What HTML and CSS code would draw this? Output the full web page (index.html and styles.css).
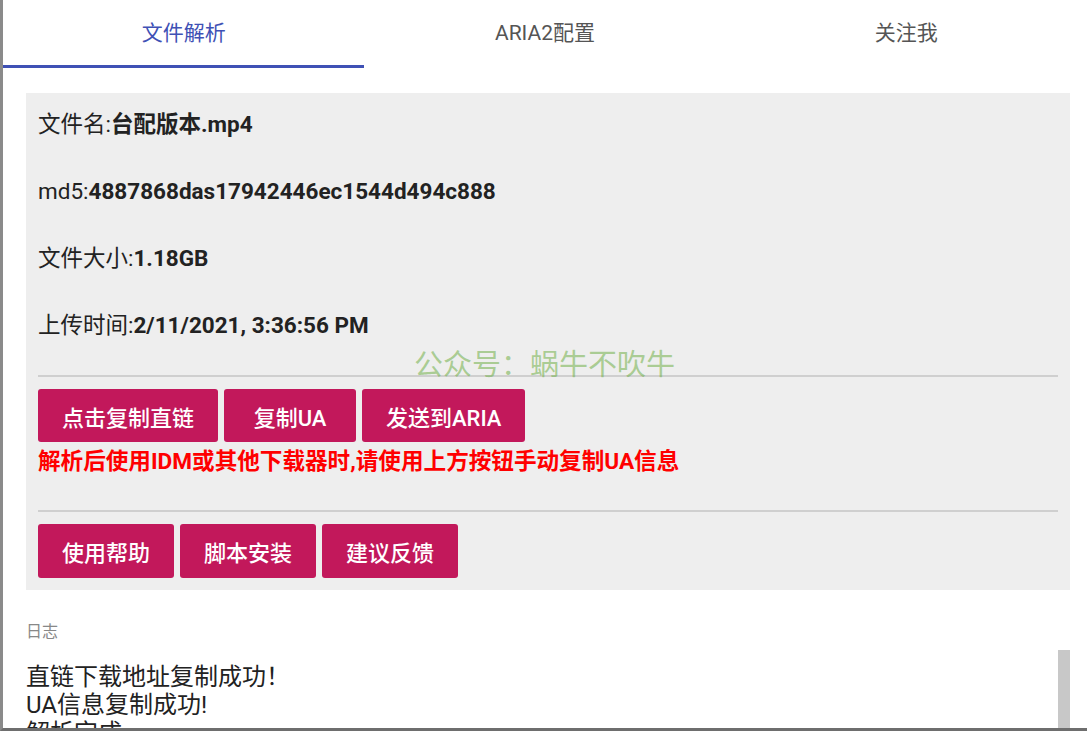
FILE: index.html
```html
<!DOCTYPE html>
<html lang="zh-CN">
<head>
    <meta charset="UTF-8">
    <meta name="viewport" content="width=device-width, initial-scale=1.0">
    <title>文件解析</title>
    <link rel="stylesheet" href="styles.css">
</head>
<body>
    <div class="frame">
        <div class="edge-mark"></div>

        <!-- Tabs -->
        <div class="tabs">
            <div class="tab active">文件解析</div>
            <div class="tab">ARIA2配置</div>
            <div class="tab">关注我</div>
        </div>

        <!-- File info panel -->
        <div class="panel">
            <p class="row">文件名:<b>台配版本.mp4</b></p>
            <p class="row">md5:<b>4887868das17942446ec1544d494c888</b></p>
            <p class="row">文件大小:<b>1.18GB</b></p>
            <p class="row last">上传时间:<b>2/11/2021, 3:36:56 PM</b></p>

            <hr class="line">
            <div class="btns">
                <button class="btn">点击复制直链</button>
                <button class="btn">复制UA</button>
                <button class="btn">发送到ARIA</button>
            </div>
            <p class="warn">解析后使用IDM或其他下载器时,请使用上方按钮手动复制UA信息</p>

            <hr class="line">
            <div class="btns">
                <button class="btn small">使用帮助</button>
                <button class="btn small">脚本安装</button>
                <button class="btn small">建议反馈</button>
            </div>

            <div class="watermark">公众号：蜗牛不吹牛</div>
        </div>

        <!-- Log -->
        <div class="log-label">日志</div>
        <div class="log">
            <div class="log-text">直链下载地址复制成功！<br>UA信息复制成功!<br>解析完成</div>
            <div class="thumb"></div>
        </div>
    </div>
</body>
</html>
```

FILE: styles.css
```css
* {
    margin: 0;
    padding: 0;
    box-sizing: border-box;
}

body {
    width: 1087px;
    height: 731px;
    overflow: hidden;
    font-family: Roboto, "Noto Sans CJK SC", sans-serif;
    color: #222;
    background: #fff;
}

.frame {
    position: relative;
    height: 731px;
    border-left: 3px solid #8a8a8a;
    border-bottom: 3px solid #6e6e6e;
    overflow: hidden;
}

/* little red sliver of the page behind */
.edge-mark {
    position: absolute;
    left: -3px;
    top: 18px;
    width: 3px;
    height: 48px;
    background: #8b1c14;
}

.tabs {
    display: flex;
    height: 68px;
}

.tab {
    flex: 1;
    text-align: center;
    font-size: 21px;
    line-height: 66px;
    color: #555;
    border-bottom: 3px solid transparent;
}

.tab.active {
    color: #3f51b5;
    border-bottom-color: #3f51b5;
}

.panel {
    position: relative;
    margin: 25px 17px 0 23px;
    padding: 18px 12px 12px 12px;
    background: #eeeeee;
}

.row {
    font-size: 22.5px;
    line-height: 27px;
    margin-bottom: 40px;
}

.row.last {
    margin-bottom: 36px;
}

.line {
    border: none;
    border-top: 2px solid #cfcfcf;
    margin-bottom: 12px;
}

.btns {
    display: flex;
    gap: 6px;
}

.btn {
    height: 53px;
    min-width: 132px;
    padding: 0 24px;
    font-family: Roboto, "Noto Sans CJK SC", sans-serif;
    font-size: 22px;
    font-weight: 500;
    color: #fff;
    background: #c2185b;
    border: none;
    border-radius: 3px;
    cursor: pointer;
}

.btn.small {
    height: 54px;
}

.warn {
    margin: 7px 0 35px;
    font-size: 22.6px;
    line-height: 26px;
    font-weight: bold;
    color: #f00;
}

.watermark {
    position: absolute;
    left: 388px;
    top: 254px;
    font-size: 29px;
    line-height: 36px;
    color: rgba(110, 175, 70, 0.55);
    pointer-events: none;
}

.log-label {
    margin: 31px 0 0 23px;
    font-size: 16px;
    line-height: 22px;
    color: #888;
}

.log {
    position: relative;
    margin: 7px 17px 0 23px;
    padding-top: 13px;
    height: 100px;
}

.log-text {
    font-size: 24px;
    line-height: 28px;
    color: #222;
}

.thumb {
    position: absolute;
    right: 0;
    top: 0;
    width: 12px;
    height: 100px;
    background: #c8c8c8;
}
```
